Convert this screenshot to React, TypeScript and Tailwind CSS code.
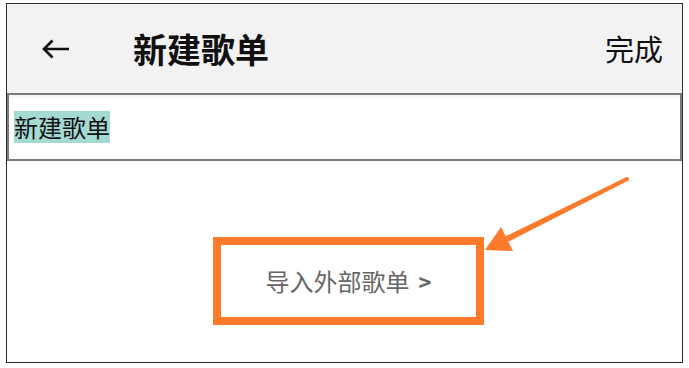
import React from "react";

export default function App() {
  const font = { fontFamily: '"Noto Sans CJK SC", "Noto Sans", sans-serif' };
  return (
    <div className="relative w-[689px] h-[368px] bg-white pt-[3px] pl-[6px]" style={font}>
      <div className="w-[677px] h-[360px] border border-[#2b2b2b] flex flex-col">
        <div className="h-[89px] bg-[#f2f2f2] flex items-center pl-[35px] pr-[19px]">
          <svg width="28" height="20" viewBox="0 0 28 20" className="shrink-0">
            <path d="M27 10H2.5M10.5 1.5L2 10l8.5 8.5" fill="none" stroke="#111" strokeWidth="2.7" strokeLinecap="butt" strokeLinejoin="miter" />
          </svg>
          <div className="ml-[63px] text-[34px] font-bold text-[#111] leading-none">新建歌单</div>
          <div className="ml-auto text-[29px] text-[#111] leading-none">完成</div>
        </div>
        <div className="h-[68px] border-2 border-[#7b7b7b] flex items-center pl-[5px] shadow-[inset_0_3px_3px_rgba(0,0,0,0.04)]">
          <span className="bg-[#a4dad2] text-[24px] leading-[32px] text-[#111]">新建歌单</span>
        </div>
        <div className="mt-[76px] ml-[206px] w-[271px] h-[88px] border-[8px] border-[#fd7a2b] flex items-center justify-center">
          <span className="text-[24px] text-[#666] leading-none">导入外部歌单</span>
          <span className="ml-[9px] text-[22px] font-semibold text-[#666] leading-none">&gt;</span>
        </div>
      </div>
      <svg className="absolute inset-0 pointer-events-none" width="689" height="368" viewBox="0 0 689 368">
        <polygon points="508.3,241.7 505.7,236.3 626.1,177.2 627.9,180.8" fill="#fd7a2b" />
        <circle cx="627" cy="179" r="2" fill="#fd7a2b" />
        <polygon points="485,250 501,227 513,251" fill="#fd7a2b" />
      </svg>
    </div>
  );
}
